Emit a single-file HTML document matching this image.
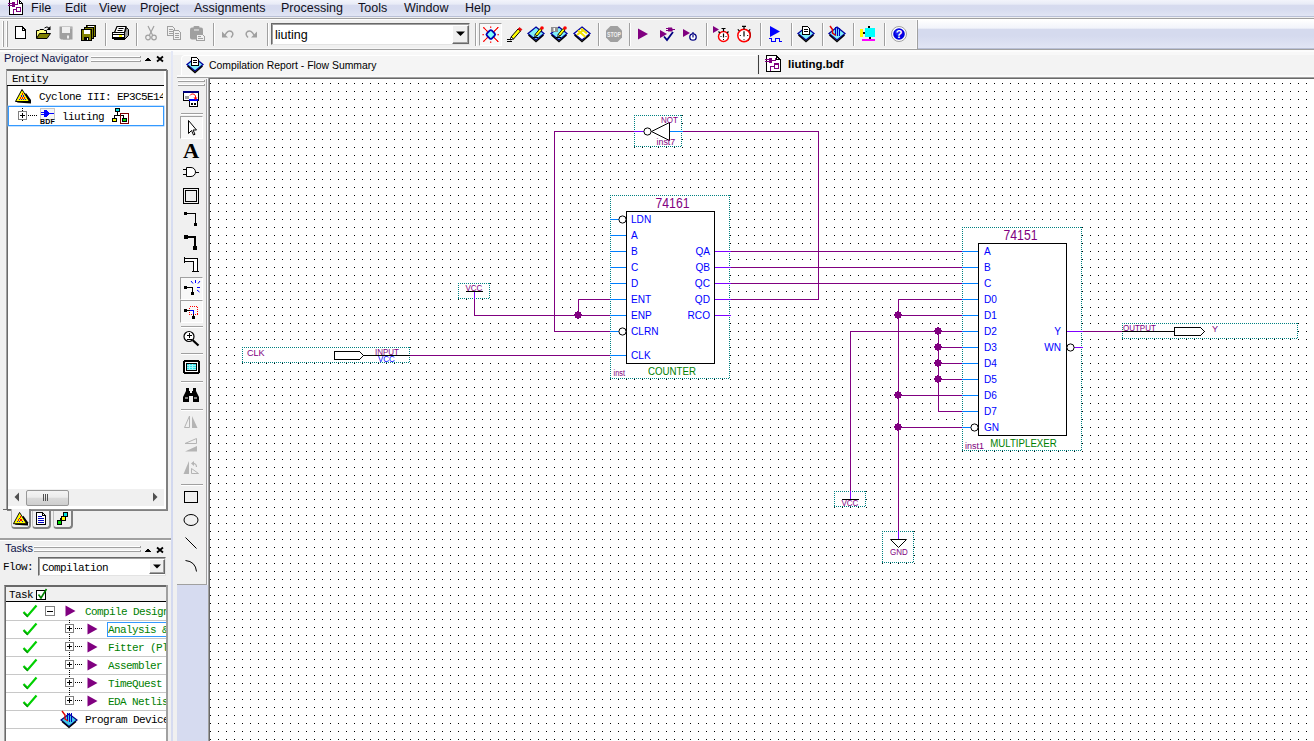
<!DOCTYPE html>
<html><head><meta charset="utf-8"><title>Quartus II - liuting</title>
<style>
html,body{margin:0;padding:0;}
body{width:1314px;height:741px;overflow:hidden;background:#f0f0f0;position:relative;font-family:"Liberation Sans",sans-serif;}
.abs{position:absolute;}
.ui{font-family:"Liberation Sans",sans-serif;font-size:10.5px;color:#000;white-space:nowrap;}
.mono{font-family:"Liberation Mono",monospace;font-size:11px;letter-spacing:-0.6px;color:#000;white-space:nowrap;}
.menu span{position:absolute;top:1px;font-size:12.5px;line-height:15px;color:#101020;white-space:nowrap;}
.sep{position:absolute;width:1px;background:#a0a0a0;border-right:1px solid #fff;}
svg{position:absolute;overflow:visible;}
</style></head><body>
<!-- menu bar -->
<div class="abs" style="left:0;top:0;width:1314px;height:16px;background:linear-gradient(#f3f4fb 0px,#e9ecf7 4px,#d7dbef 5.5px,#d6dbef 9px,#e1e5f4 16px);"></div>
<div class="abs" style="left:0;top:16px;width:1314px;height:1px;background:#b9c0d6;"></div>
<div class="abs" style="left:0;top:17px;width:1314px;height:1px;background:#f0f0f0;"></div>
<div class="abs" style="left:0;top:18px;width:1314px;height:1px;background:#a0a0a0;"></div>
<div class="abs" style="left:0;top:19px;width:1314px;height:1px;background:#ffffff;"></div>
<svg style="left:8px;top:0px" width="16" height="16" viewBox="0 0 16 16" shape-rendering="crispEdges">
 <path d="M1.500 0V14.500H14.500V3.500L11.500 0.500" fill="#fff" stroke="#000" stroke-width="1.200"/><path d="M11.500 0V3.500H14.500" fill="none" stroke="#000"/>
 <path d="M0 3.5H5M0 5.5H5" stroke="#800080" stroke-width="1"/>
 <rect x="4" y="2" width="3" height="5" fill="#800080"/>
 <path d="M7 4.5H9.5V0" stroke="#800080" fill="none"/>
 <path d="M5.5 14V9.5H8" stroke="#800080" fill="none"/>
 <rect x="8.5" y="7.5" width="4" height="4" fill="#fff" stroke="#800080"/>
</svg>
<div class="menu abs" style="left:0;top:0;height:16px;">
<span style="left:31px">File</span><span style="left:65px">Edit</span><span style="left:99px">View</span><span style="left:140px">Project</span><span style="left:194px">Assignments</span><span style="left:281px">Processing</span><span style="left:358px">Tools</span><span style="left:404px">Window</span><span style="left:465px">Help</span>
</div>
<!-- toolbar -->
<div class="abs" style="left:0;top:20px;width:1314px;height:28px;background:linear-gradient(#ffffff 0px,#f2f4fb 8px,#d5daee 9.5px,#d5daee 16px,#e1e5f4 28px);"></div>
<div class="abs" style="left:0;top:48px;width:1314px;height:1px;background:#b9c0d6;"></div>
<div class="abs" style="left:0;top:20px;width:916px;height:28px;background:#f0f0f0;border-right:1px solid #f8f8f8;border-bottom:1px solid #f8f8f8;"></div>
<div class="abs" style="left:917px;top:20px;width:1px;height:29px;background:#a0a0a0;"></div>
<div class="abs" style="left:0;top:49px;width:1314px;height:1px;background:#a0a0a0;"></div>
<div class="abs" style="left:0;top:50px;width:1314px;height:2px;background:#fcfcfc;"></div><div class="abs" style="left:173px;top:52px;width:1141px;height:3px;background:#f8f8f8;"></div>
<div class="abs" style="left:2px;top:21px;width:1px;height:26px;background:#a0a0a0;border-left:1px solid #fff"></div>
<div class="abs" style="left:6px;top:21px;width:1px;height:26px;background:#a0a0a0;border-left:1px solid #fff"></div>
<div class="sep" style="left:105px;top:23px;height:23px"></div>
<div class="sep" style="left:136px;top:23px;height:23px"></div>
<div class="sep" style="left:213px;top:23px;height:23px"></div>
<div class="sep" style="left:267px;top:23px;height:23px"></div>
<div class="sep" style="left:475px;top:23px;height:23px"></div>
<div class="sep" style="left:598px;top:23px;height:23px"></div>
<div class="sep" style="left:629px;top:23px;height:23px"></div>
<div class="sep" style="left:706px;top:23px;height:23px"></div>
<div class="sep" style="left:760px;top:23px;height:23px"></div>
<div class="sep" style="left:791px;top:23px;height:23px"></div>
<div class="sep" style="left:822px;top:23px;height:23px"></div>
<div class="sep" style="left:853px;top:23px;height:23px"></div>
<div class="sep" style="left:884px;top:23px;height:23px"></div>
<!-- combo -->
<div class="abs" style="left:271px;top:23px;width:197px;height:20px;background:#fff;border:1px solid;border-color:#696969 #e3e3e3 #e3e3e3 #696969;box-shadow:inset 1px 1px 0 #a0a0a0;"></div>
<div class="abs ui" style="left:275px;top:28px;font-size:12.5px;line-height:15px;">liuting</div>
<div class="abs" style="left:452px;top:25px;width:15px;height:17px;background:#f0f0f0;border:1px solid;border-color:#fff #696969 #696969 #fff;box-shadow:inset -1px -1px 0 #a0a0a0;"></div>
<svg style="left:456px;top:31px" width="9" height="6"><path d="M0 0.5H9L4.5 5Z" fill="#000"/></svg>
<svg style="left:11px;top:24px" width="18" height="18" viewBox="0 0 18 18"><path d="M4.5 2.5H11L14.5 6V14.5H4.5Z" fill="#fff" stroke="#000" stroke-width="1.2" shape-rendering="crispEdges"/><path d="M11 2.5V6H14.5" fill="none" stroke="#000" shape-rendering="crispEdges"/></svg>
<svg style="left:34px;top:24px" width="18" height="18" viewBox="0 0 18 18"><path d="M2.5 14V6.5H5L6 5.5H9.5L10.5 6.5H12.5V9" fill="#ffff80" stroke="#000" stroke-width="1"/><path d="M2.5 14.5L5.5 9.5H16.5L13 14.5Z" fill="#808000" stroke="#000"/><path d="M10.5 4Q13 1.5 15.5 4.5" stroke="#000" fill="none"/><path d="M16.5 2V6H12.5Z" fill="#000"/></svg>
<svg style="left:57px;top:24px" width="18" height="18" viewBox="0 0 18 18"><path d="M2.500 2.500H15.500V15.500H4L2.500 14Z" fill="#a0a0a0"/><rect x="5" y="3" width="8" height="6" fill="#f0f0f0"/><rect x="6" y="11" width="7" height="4.500" fill="#a0a0a0"/><rect x="10" y="11.500" width="2" height="3" fill="#f0f0f0"/><rect x="13.5" y="3.500" width="1" height="1" fill="#f0f0f0"/></svg>
<svg style="left:79px;top:24px" width="18" height="18" viewBox="0 0 18 18"><g shape-rendering="crispEdges"><rect x="7.5" y="1.500" width="9" height="11" fill="#808000" stroke="#000"/><rect x="5.500" y="3.500" width="9" height="11" fill="#808000" stroke="#000"/><rect x="2.500" y="5.500" width="10" height="11" fill="#808000" stroke="#000"/><rect x="4.500" y="6" width="6" height="4" fill="#fff"/><rect x="5" y="12.500" width="5" height="4" fill="#000"/><rect x="8" y="13.500" width="1" height="2" fill="#fff"/><rect x="9" y="2" width="6" height="1" fill="#fff"/></g></svg>
<svg style="left:110px;top:24px" width="20" height="18" viewBox="0 0 20 18"><path d="M14.500 8.500L16.500 3.500L18.500 5.500V11.500L14.500 15.500Z" fill="#9a9a9a" stroke="#000" stroke-width="1"/><path d="M7 2.500H16L14.500 8.500H4.500Z" fill="#fff" stroke="#000" stroke-width="1.200"/><path d="M8.500 4.500H13.500M7.500 6.500H12.500" stroke="#000" stroke-width="1"/><g shape-rendering="crispEdges"><rect x="2.500" y="8.500" width="12" height="6" fill="#fff" stroke="#000"/><path d="M3 10.500H14M3 13.500H14M4 15.500H15" stroke="#000"/><rect x="9" y="11" width="3" height="2" fill="#ffff00"/></g></svg>
<svg style="left:142px;top:24px" width="18" height="18" viewBox="0 0 18 18"><path d="M6 2L10.500 11M12 2L7.500 11" stroke="#a0a0a0" stroke-width="1.200" fill="none"/><circle cx="6" cy="13.500" r="2.300" fill="none" stroke="#a0a0a0" stroke-width="1.200"/><circle cx="12" cy="13.500" r="2.300" fill="none" stroke="#a0a0a0" stroke-width="1.200"/></svg>
<svg style="left:165px;top:24px" width="18" height="18" viewBox="0 0 18 18"><g shape-rendering="crispEdges" fill="#f0f0f0" stroke="#a0a0a0"><path d="M2.500 2.500H7.500L9.500 4.500V11.500H2.500Z"/><path d="M4 5.500H8M4 7.500H8M4 9.500H8" /><path d="M8.500 6.500H13.500L15.500 8.500V15.500H8.500Z"/><path d="M10 9.500H14M10 11.500H14M10 13.500H14"/></g></svg>
<svg style="left:188px;top:24px" width="19" height="19" viewBox="0 0 19 19"><rect x="2" y="3.500" width="13" height="12" rx="2" fill="#a0a0a0"/><rect x="5.500" y="2" width="6" height="3" rx="1" fill="#a0a0a0"/><rect x="6" y="5.500" width="5" height="1" fill="#f0f0f0"/><g shape-rendering="crispEdges"><path d="M8.500 10.500H14.500L16.500 12.500V16.500H8.500Z" fill="#f0f0f0" stroke="#a0a0a0"/><path d="M10 12.500H13M10 14.500H15" stroke="#a0a0a0"/></g></svg>
<svg style="left:219px;top:24px" width="18" height="18" viewBox="0 0 18 18"><path d="M6 11Q9 5.500 12.500 7.500Q15.500 10 12 13.500" fill="none" stroke="#a0a0a0" stroke-width="1.500"/><path d="M3 7.500V13.500H9Z" fill="#a0a0a0"/></svg>
<svg style="left:242px;top:24px" width="18" height="18" viewBox="0 0 18 18"><path d="M12 11Q9 5.500 5.500 7.500Q2.500 10 6 13.500" fill="none" stroke="#a0a0a0" stroke-width="1.500"/><path d="M15 7.500V13.500H9Z" fill="#a0a0a0"/></svg>
<div class="abs" style="left:479px;top:23px;width:21px;height:21px;background:#f8f8f8;border:1px solid;border-color:#a0a0a0 #fff #fff #a0a0a0;"></div>
<svg style="left:481px;top:25px" width="18" height="18" viewBox="0 0 18 18"><g stroke="#ff0000" stroke-width="1" fill="none"><path d="M2 2.500L7.500 7M2.500 2L7 7.500M17.500 2.500L12 7M17 2L12.500 7.500M2 16.500L7.500 12M2.500 17L7 11.500M17.500 16.500L12 12M17 17L12.500 11.500"/></g><g fill="#ff0000"><rect x="9" y="1.500" width="1.300" height="1.300"/><rect x="9" y="16.500" width="1.300" height="1.300"/><rect x="1.500" y="9" width="1.300" height="1.300"/><rect x="16.500" y="9" width="1.300" height="1.300"/></g><rect x="-3.500" y="-3.500" width="7" height="7" rx="1.600" transform="translate(9.800,9.500) rotate(45)" fill="#80ffff" stroke="#0000b0" stroke-width="1.800"/></svg>
<svg style="left:505px;top:25px" width="19" height="19" viewBox="0 0 19 19"><path d="M6 12L13 4L15.500 6L8.500 14Z" fill="#ffff00" stroke="#000" stroke-width="1"/><path d="M13 4L14.500 2.500L17 4.500L15.500 6Z" fill="#ff0000" stroke="#c00000" stroke-width="0.600"/><path d="M6 12L5 15L8.500 14Z" fill="#fff" stroke="#000" stroke-width="0.800"/><path d="M2 14.500H7M2 16.500H7" stroke="#000" stroke-width="1" shape-rendering="crispEdges"/></svg>
<svg style="left:527px;top:25px" width="18" height="18" viewBox="0 0 18 18"><path d="M9 2L17 8.500L9 15L1 8.500Z" fill="#7ff0fb" stroke="#0000a0" stroke-width="1.300"/><path d="M1.500 10L9 16.500L16.500 10" stroke="#000" stroke-width="1.500" fill="none"/><path d="M8 9.500L13 3.500L15 5L10 11Z" fill="#ffff00" stroke="#000" stroke-width="0.900"/><circle cx="15" cy="3" r="1.800" fill="#ff0000"/><path d="M8 9.500L7.500 11.800L10 11Z" fill="#fff" stroke="#000" stroke-width="0.700"/><path d="M6 12.500H11" stroke="#000"/></svg>
<svg style="left:550px;top:25px" width="18" height="18" viewBox="0 0 18 18"><path d="M9 2L17 8.500L9 15L1 8.500Z" fill="#7ff0fb" stroke="#0000a0" stroke-width="1.300"/><path d="M1.500 10L9 16.500L16.500 10" stroke="#000" stroke-width="1.500" fill="none"/><rect x="1" y="2" width="7" height="5" fill="#909090"/><rect x="3.500" y="3" width="1.500" height="3" fill="#fff"/><path d="M8 9.500L13 3.500L15 5L10 11Z" fill="#ffff00" stroke="#000" stroke-width="0.900"/><circle cx="15" cy="3" r="1.800" fill="#ff0000"/><path d="M8 9.500L7.500 11.800L10 11Z" fill="#fff" stroke="#000" stroke-width="0.700"/><path d="M6 12.500H11" stroke="#000"/></svg>
<svg style="left:573px;top:25px" width="18" height="18" viewBox="0 0 18 18"><path d="M9 2L17 8.500L9 15L1 8.500Z" fill="#fff" stroke="#0000a0" stroke-width="1.300"/><path d="M1.500 10L9 16.500L16.500 10" stroke="#000" stroke-width="1.500" fill="none"/><path d="M5 5.500L12.500 12M8 3.500L14 8.500M4 10L11 4.500" stroke="#f0e000" stroke-width="2.200"/></svg>
<svg style="left:605px;top:25px" width="18" height="18" viewBox="0 0 18 18"><path d="M5.500 1H12.500L17 5.500V12.500L12.500 17H5.500L1 12.500V5.500Z" fill="#a0a0a0"/><text x="9" y="12" font-size="7.500" font-weight="bold" font-family="Liberation Sans, sans-serif" fill="#f0f0f0" text-anchor="middle" textLength="14" lengthAdjust="spacingAndGlyphs">STOP</text></svg>
<svg style="left:634px;top:25px" width="18" height="18" viewBox="0 0 18 18"><path d="M4 3.500V14.500L14 9Z" fill="#800080"/></svg>
<svg style="left:658px;top:25px" width="19" height="18" viewBox="0 0 19 18"><path d="M2 5V13L9 9Z" fill="#800080"/><path d="M8 3.500H10M8 5.500H10" stroke="#800080"/><path d="M10 2.500H14Q15.500 4.500 14 6.500H10Z" fill="#800080"/><path d="M14 4.500H17" stroke="#800080"/><path d="M6 11.500L9 15L15 7" stroke="#000080" stroke-width="1.800" fill="none"/></svg>
<svg style="left:681px;top:25px" width="19" height="18" viewBox="0 0 19 18"><path d="M2 4V12L9 8Z" fill="#800080"/><circle cx="12" cy="12" r="3.200" fill="#fff" stroke="#000080" stroke-width="1.300"/><path d="M12 7V9M12 10V12.500" stroke="#000080" stroke-width="1.200"/></svg>
<svg style="left:712px;top:25px" width="19" height="19" viewBox="0 0 19 19"><path d="M1 1V8L7 4.500Z" fill="#800080"/><circle cx="11.5" cy="11.5" r="5" fill="#fff" stroke="#ff0000" stroke-width="1.500"/><path d="M11.5 3.5V6.5M9.5 3.5H13.5M6.5 6.5L8.0 8.0M16.5 6.5L15.0 8.0" stroke="#000" stroke-width="1.200"/><path d="M11.5 8.5V12.5" stroke="#000" stroke-width="1.200"/><path d="M8.5 11.5H9.5M13.5 11.5H14.5M11.5 14.0V15.0" stroke="#000" stroke-width="1"/></svg>
<svg style="left:735px;top:25px" width="19" height="19" viewBox="0 0 19 19"><circle cx="9" cy="10.5" r="6.2" fill="#fff" stroke="#ff0000" stroke-width="1.500"/><path d="M9 1.2999999999999998V4.3M7 1.2999999999999998H11M2.8 4.3L4.3 5.8M15.2 4.3L13.7 5.8" stroke="#000" stroke-width="1.200"/><path d="M9 6.3V11.5" stroke="#000" stroke-width="1.200"/><path d="M4.8 10.5H5.8M12.2 10.5H13.2M9 14.2V15.2" stroke="#000" stroke-width="1"/><path d="M14.500 6Q17 11 13 15.500" stroke="#c00000" fill="none" stroke-width="1.200"/></svg>
<svg style="left:766px;top:25px" width="18" height="18" viewBox="0 0 18 18"><path d="M4 1V12L14 6.500Z" fill="#0000ff"/><path d="M3 13.500H5.500V16.500H9.500V13.500H13.500V16.500H16" stroke="#0000ff" stroke-width="1.200" fill="none" shape-rendering="crispEdges"/></svg>
<svg style="left:797px;top:25px" width="18" height="18" viewBox="0 0 18 18"><path d="M9 2L17 8.500L9 15L1 8.500Z" fill="#7ff0fb" stroke="#0000a0" stroke-width="1.300"/><path d="M1.500 10L9 16.500L16.500 10" stroke="#000" stroke-width="1.500" fill="none"/><path d="M5.500 1.500H10.500L12.500 3.500V9.500H5.500Z" fill="#fff" stroke="#000" shape-rendering="crispEdges"/><path d="M7 4.500H11M7 6.500H11" stroke="#000" shape-rendering="crispEdges"/></svg>
<svg style="left:828px;top:25px" width="18" height="18" viewBox="0 0 18 18"><path d="M9 2L17 8.500L9 15L1 8.500Z" fill="#7ff0fb" stroke="#0000a0" stroke-width="1.300"/><path d="M1.500 10L9 16.500L16.500 10" stroke="#000" stroke-width="1.500" fill="none"/><path d="M7.500 2V10M9.500 2V11M11.500 3V11" stroke="#0000c0" stroke-width="1.100"/><path d="M2 1L4.500 4.500V8L8 10.500" stroke="#e00000" stroke-width="1.500" fill="none"/></svg>
<svg style="left:859px;top:25px" width="18" height="18" viewBox="0 0 18 18"><g shape-rendering="crispEdges"><rect x="1" y="4" width="3" height="8" fill="#ffff00"/><rect x="4" y="7" width="3" height="2" fill="#000"/><rect x="6" y="3" width="10" height="9" fill="#00ffff"/><rect x="9" y="1" width="2" height="2" fill="#000"/><rect x="10" y="12" width="2" height="2" fill="#000"/><rect x="3" y="14" width="13" height="2" fill="#ff00ff"/></g></svg>
<svg style="left:890px;top:25px" width="18" height="18" viewBox="0 0 18 18"><circle cx="9" cy="9" r="7.500" fill="#fff" stroke="#a0a0a0" stroke-width="1"/><circle cx="9" cy="9" r="5.800" fill="#0000e0"/><circle cx="8" cy="7.500" r="3" fill="#3030ff" opacity="0.6"/><text x="9" y="13" font-size="11" font-weight="bold" font-family="Liberation Sans, sans-serif" fill="#fff" text-anchor="middle">?</text></svg>
<!-- tab row -->
<div class="abs" style="left:181px;top:55px;width:575px;height:20px;background:#f5f5f5;border-top-left-radius:4px;border-left:1px solid #fff;border-top:1px solid #fff;"></div>
<div class="abs" style="left:760px;top:55px;width:554px;height:20px;background:#f3f3f3;border-top-left-radius:4px;"></div>
<div class="abs ui" style="left:209px;top:59px;line-height:13px;font-size:10.4px;">Compilation Report - Flow Summary</div>
<div class="abs" style="left:758px;top:55px;width:1px;height:19px;background:#404040;"></div>
<div class="abs ui" style="left:788px;top:58px;line-height:13px;font-size:11.5px;font-weight:bold;">liuting.bdf</div>
<svg style="left:186px;top:56px" width="18" height="18" viewBox="0 0 18 18"><path d="M9 2L17 8.500L9 15L1 8.500Z" fill="#7ff0fb" stroke="#0000a0" stroke-width="1.300"/><path d="M1.500 10L9 16.500L16.500 10" stroke="#000" stroke-width="1.500" fill="none"/><path d="M5.500 1.500H10.500L12.500 3.500V9.500H5.500Z" fill="#fff" stroke="#000" shape-rendering="crispEdges"/><path d="M7 4.500H11M7 6.500H11" stroke="#000" shape-rendering="crispEdges"/></svg>
<svg style="left:765px;top:55px" width="17" height="18" viewBox="0 0 16 17" shape-rendering="crispEdges"><path d="M1.500 0.500V15.500H14.500V4.500L10.500 0.500Z" fill="#fff" stroke="#000" stroke-width="1.200"/><path d="M10.500 0.500V4.500H14.500" fill="none" stroke="#000"/><path d="M0 4.500H5M0 6.500H5" stroke="#800080" stroke-width="1"/><rect x="4" y="3" width="3" height="5" fill="#800080"/><path d="M7 5.500H9.500V3" stroke="#800080" fill="none"/><path d="M5.500 15V10.500H8" stroke="#800080" fill="none"/><rect x="8.500" y="8.500" width="4" height="4" fill="#fff" stroke="#800080"/></svg>
<!-- left: project navigator -->
<div class="abs" style="left:171px;top:51px;width:2px;height:690px;background:linear-gradient(#e4e8f6,#cfd6ee 40%,#d6dbf0);"></div>
<div class="abs ui" style="left:4px;top:52px;font-size:11px;line-height:13px;color:#0c1248;">Project Navigator</div>
<div class="abs" style="left:91px;top:56px;width:49px;height:1px;background:#fff;border-bottom:1px solid #a0a0a0;border-right:1px solid #a0a0a0;"></div>
<div class="abs" style="left:91px;top:60px;width:49px;height:1px;background:#fff;border-bottom:1px solid #a0a0a0;border-right:1px solid #a0a0a0;"></div>
<svg style="left:144px;top:55px" width="22" height="8" shape-rendering="crispEdges"><path d="M1 6H7V5H6V4H5V3H3V4H2V5H1Z" fill="#000"/><path d="M13 1.5L19 6.5M19 1.5L13 6.5" stroke="#000" stroke-width="1.8" shape-rendering="auto"/></svg>
<div class="abs" style="left:6px;top:69px;width:159px;height:439px;background:#fff;border:1px solid;border-color:#696969 #808080 #909090 #a0a0a0;box-shadow:inset 1px 1px 0 #696969, 1px 1px 0 #808080;"></div>
<div class="abs" style="left:7px;top:71px;width:157px;height:14px;background:#f0f0f0;border-bottom:1px solid #000;"></div>
<div class="abs mono" style="left:12px;top:73px;line-height:13px;">Entity</div>
<svg style="left:14px;top:88px" width="18" height="17" viewBox="0 0 18 17">
 <path d="M3 14.5L17 15.5L17 12L12 5Z" fill="#000"/>
 <path d="M8 1.5L1.5 13.5H15.5Z" fill="#ffff00" stroke="#000" stroke-width="1" stroke-linejoin="round"/>
 <g shape-rendering="crispEdges"><rect x="8" y="5" width="1" height="2" fill="#ff0000"/><rect x="7" y="7" width="1" height="2" fill="#0000ff"/><rect x="9" y="7" width="1" height="2" fill="#0000ff"/><rect x="6" y="9" width="1" height="2" fill="#ff0000"/><rect x="8" y="9" width="1" height="2" fill="#ff0000"/><rect x="10" y="9" width="1" height="2" fill="#ff0000"/><rect x="5" y="11" width="1" height="1" fill="#0000ff"/><rect x="7" y="11" width="1" height="1" fill="#0000ff"/><rect x="9" y="11" width="1" height="1" fill="#0000ff"/><rect x="11" y="11" width="1" height="1" fill="#0000ff"/></g>
</svg>
<div class="abs mono" style="left:39px;top:91px;line-height:13px;width:124px;overflow:hidden;">Cyclone III: EP3C5E144</div>
<div class="abs" style="left:8px;top:106px;width:154px;height:18px;border:1px solid #3399ff;box-shadow:0 0 0 0.5px #8cc4ff;"></div>
<svg style="left:17px;top:107px" width="40" height="18" viewBox="0 0 40 18" shape-rendering="crispEdges">
 <rect x="1.5" y="4.5" width="8" height="8" fill="#fff" stroke="#808080"/><path d="M3 8.5H8M5.5 6V11" stroke="#000"/>
 <path d="M5.5 1V4M5.5 13V14" stroke="#000" stroke-dasharray="1 1"/>
 <path d="M11 8.5H20" stroke="#000" stroke-dasharray="1 1"/>
 <rect x="23" y="1" width="14" height="11" fill="#f4f4f4" stroke="#c8c8c8" stroke-width="1"/>
 <path d="M24 5.5H28M24 7.5H28M32 6.5H37" stroke="#0000ff"/><path d="M27 3H30L33 6.5L30 10H27Z" fill="#0000ff"/>
</svg>
<div class="abs" style="left:40px;top:118px;font:bold 7px 'Liberation Sans',sans-serif;letter-spacing:0.2px;color:#000;line-height:7px;">BDF</div>
<div class="abs mono" style="left:62px;top:111px;line-height:13px;">liuting</div>
<svg style="left:111px;top:107px" width="19" height="18" viewBox="0 0 19 18" shape-rendering="crispEdges">
 <path d="M6.5 4V8.5M3.5 12V8.5H12.5V12" stroke="#000" fill="none"/>
 <rect x="4.5" y="1.5" width="4" height="3" fill="#00e0e0" stroke="#000"/>
 <rect x="1.5" y="11.5" width="4" height="3" fill="#ffff00" stroke="#000"/>
 <rect x="9.5" y="6.5" width="8" height="10" fill="none" stroke="#800000"/>
 <rect x="11.5" y="11.5" width="4" height="3" fill="#00e000" stroke="#000"/>
</svg>
<!-- h scrollbar -->
<div class="abs" style="left:8px;top:489px;width:156px;height:17px;background:#f0f0f0;"></div>
<svg style="left:14px;top:492px" width="6" height="10"><path d="M5 0.5V9.5L0.5 5Z" fill="#505050"/></svg>
<svg style="left:152px;top:492px" width="6" height="10"><path d="M1 0.5V9.5L5.5 5Z" fill="#505050"/></svg>
<div class="abs" style="left:26px;top:490px;width:41px;height:14px;border:1px solid #979797;border-radius:2px;background:linear-gradient(#f4f4f4 0,#ececec 45%,#dadada 50%,#cecece 100%);"></div>
<div class="abs" style="left:43px;top:494px;width:1px;height:7px;background:#505050;box-shadow:2px 0 0 #505050,4px 0 0 #505050;"></div>
<!-- bottom tabs -->
<div class="abs" style="left:3px;top:509px;width:8px;height:1px;background:#696969;"></div>
<div class="abs" style="left:11px;top:509px;width:17px;height:18px;background:#f0f0f0;border:solid #808080;border-width:0 2px 2px 1px;border-left-color:#b0b0b0;border-radius:0 0 4px 4px;"></div>
<div class="abs" style="left:32px;top:511px;width:16px;height:16px;background:#f0f0f0;border:solid #808080;border-width:0 2px 2px 1px;border-left-color:#c0c0c0;border-radius:0 0 4px 4px;"></div>
<div class="abs" style="left:53px;top:511px;width:17px;height:16px;background:#f0f0f0;border:solid #808080;border-width:0 2px 2px 1px;border-left-color:#c0c0c0;border-radius:0 0 4px 4px;"></div>
<svg style="left:12px;top:511px" width="17" height="16" viewBox="0 0 18 17">
 <path d="M3 14.5L17 15.5L17 12L12 5Z" fill="#000"/>
 <path d="M8 1.5L1.5 13.5H15.5Z" fill="#ffff00" stroke="#000" stroke-width="1" stroke-linejoin="round"/>
 <g shape-rendering="crispEdges"><rect x="8" y="5" width="1" height="2" fill="#ff0000"/><rect x="7" y="7" width="1" height="2" fill="#0000ff"/><rect x="9" y="7" width="1" height="2" fill="#0000ff"/><rect x="6" y="9" width="1" height="2" fill="#ff0000"/><rect x="8" y="9" width="1" height="2" fill="#ff0000"/><rect x="10" y="9" width="1" height="2" fill="#ff0000"/><rect x="5" y="11" width="1" height="1" fill="#0000ff"/><rect x="7" y="11" width="1" height="1" fill="#0000ff"/><rect x="9" y="11" width="1" height="1" fill="#0000ff"/><rect x="11" y="11" width="1" height="1" fill="#0000ff"/></g>
</svg>
<svg style="left:35px;top:512px" width="12" height="14" viewBox="0 0 12 14" shape-rendering="crispEdges">
 <path d="M1.5 0.5H7.5L10.5 3.5V12.5H1.5Z" fill="#fff" stroke="#000"/><path d="M7.5 0.5V3.5H10.5" fill="none" stroke="#000"/>
 <path d="M3 4.5H7M3 6.5H9M3 8.5H9M3 10.5H9" stroke="#0000c0"/>
</svg>
<svg style="left:56px;top:512px" width="14" height="14" viewBox="0 0 14 14" shape-rendering="crispEdges">
 <path d="M4.5 9V6.5H7M9.5 6V4" stroke="#000" fill="none"/>
 <rect x="7.5" y="0.5" width="4" height="4" fill="#00e0e0" stroke="#000"/>
 <rect x="5.5" y="4.5" width="4" height="4" fill="#ffff00" stroke="#000"/>
 <rect x="1.5" y="8.5" width="4" height="4" fill="#00e000" stroke="#000"/>
</svg>
<!-- tasks -->
<div class="abs" style="left:0;top:538px;width:171px;height:2px;background:#a0a0a0;border-bottom:1px solid #fff;"></div>
<div class="abs ui" style="left:5px;top:542px;font-size:11px;line-height:13px;color:#0c1248;">Tasks</div>
<div class="abs" style="left:34px;top:546px;width:106px;height:1px;background:#fff;border-bottom:1px solid #a0a0a0;border-right:1px solid #a0a0a0;"></div>
<div class="abs" style="left:34px;top:550px;width:106px;height:1px;background:#fff;border-bottom:1px solid #a0a0a0;border-right:1px solid #a0a0a0;"></div>
<svg style="left:144px;top:546px" width="22" height="8" shape-rendering="crispEdges"><path d="M1 6H7V5H6V4H5V3H3V4H2V5H1Z" fill="#000"/><path d="M13 1.5L19 6.5M19 1.5L13 6.5" stroke="#000" stroke-width="1.8" shape-rendering="auto"/></svg>
<div class="abs mono" style="left:3px;top:561px;line-height:13px;">Flow:</div>
<div class="abs" style="left:38px;top:557px;width:126px;height:17px;background:#fff;border:1px solid;border-color:#696969 #e3e3e3 #e3e3e3 #696969;box-shadow:inset 1px 1px 0 #a0a0a0;"></div>
<div class="abs mono" style="left:42px;top:562px;line-height:13px;">Compilation</div>
<div class="abs" style="left:149px;top:559px;width:14px;height:13px;background:#f0f0f0;border:1px solid;border-color:#fff #696969 #696969 #fff;box-shadow:inset -1px -1px 0 #a0a0a0;"></div>
<svg style="left:153px;top:564px" width="8" height="5"><path d="M0 0.5H8L4 4.5Z" fill="#000"/></svg>
<div class="abs" style="left:4px;top:585px;width:161px;height:160px;background:#fff;border:1px solid;border-color:#696969 #e3e3e3 #e3e3e3 #a0a0a0;box-shadow:inset 1px 1px 0 #696969, 1px 0 0 #fff;"></div>
<div class="abs" style="left:6px;top:587px;width:160px;height:14px;background:#f0f0f0;border-bottom:1px solid #000;"></div>
<div class="abs mono" style="left:9px;top:589px;line-height:13px;">Task</div>
<svg style="left:35px;top:588px" width="13" height="13" viewBox="0 0 13 13"><rect x="1.5" y="2.5" width="9" height="9" fill="#fff" stroke="#000"/><path d="M3.5 6.5L6 10L11.5 1" stroke="#008000" stroke-width="1.6" fill="none"/></svg>
<div class="abs" style="left:6px;top:620px;width:160px;height:1px;background:#c8c8c8;"></div>
<svg style="left:22px;top:604px" width="16" height="14" viewBox="0 0 16 14"><path d="M1.5 8L5.5 12L14.5 1.5" stroke="#00d000" stroke-width="2.2" fill="none"/><path d="M2 9.5L5.5 13" stroke="#006000" stroke-width="1" fill="none"/></svg>
<svg style="left:45px;top:606px" width="11" height="11" shape-rendering="crispEdges"><rect x="0.5" y="0.5" width="9" height="9" fill="#fff" stroke="#808080"/><path d="M2 5.5H8" stroke="#000"/></svg>
<svg style="left:65px;top:605px" width="11" height="12"><path d="M0.5 0.5V11.5L10.5 6Z" fill="#800080"/></svg>
<div class="abs mono" style="left:85px;top:606px;line-height:13px;color:#008000;width:81px;overflow:hidden;">Compile Design</div>
<div class="abs" style="left:6px;top:638px;width:160px;height:1px;background:#c8c8c8;"></div>
<svg style="left:22px;top:622px" width="16" height="14" viewBox="0 0 16 14"><path d="M1.5 8L5.5 12L14.5 1.5" stroke="#00d000" stroke-width="2.2" fill="none"/><path d="M2 9.5L5.5 13" stroke="#006000" stroke-width="1" fill="none"/></svg>
<svg style="left:64px;top:620px" width="22" height="18" shape-rendering="crispEdges"><path d="M5.5 0V18" stroke="#000" stroke-dasharray="1 1"/><rect x="1.5" y="4.5" width="8" height="8" fill="#fff" stroke="#808080"/><path d="M3 8.5H8M5.5 6V11" stroke="#000"/><path d="M11 8.5H19" stroke="#000" stroke-dasharray="1 1"/></svg>
<svg style="left:87px;top:623px" width="11" height="12"><path d="M0.5 0.5V11.5L10.5 6Z" fill="#800080"/></svg>
<div class="abs" style="left:107px;top:622px;width:62px;height:13px;border:1px solid #3399ff;border-right:none;"></div>
<div class="abs mono" style="left:108px;top:624px;line-height:13px;color:#008000;width:58px;overflow:hidden;">Analysis &amp; Synthesis</div>
<div class="abs" style="left:6px;top:656px;width:160px;height:1px;background:#c8c8c8;"></div>
<svg style="left:22px;top:640px" width="16" height="14" viewBox="0 0 16 14"><path d="M1.5 8L5.5 12L14.5 1.5" stroke="#00d000" stroke-width="2.2" fill="none"/><path d="M2 9.5L5.5 13" stroke="#006000" stroke-width="1" fill="none"/></svg>
<svg style="left:64px;top:638px" width="22" height="18" shape-rendering="crispEdges"><path d="M5.5 0V18" stroke="#000" stroke-dasharray="1 1"/><rect x="1.5" y="4.5" width="8" height="8" fill="#fff" stroke="#808080"/><path d="M3 8.5H8M5.5 6V11" stroke="#000"/><path d="M11 8.5H19" stroke="#000" stroke-dasharray="1 1"/></svg>
<svg style="left:87px;top:641px" width="11" height="12"><path d="M0.5 0.5V11.5L10.5 6Z" fill="#800080"/></svg>
<div class="abs mono" style="left:108px;top:642px;line-height:13px;color:#008000;width:58px;overflow:hidden;">Fitter (Place &amp; Route)</div>
<div class="abs" style="left:6px;top:674px;width:160px;height:1px;background:#c8c8c8;"></div>
<svg style="left:22px;top:658px" width="16" height="14" viewBox="0 0 16 14"><path d="M1.5 8L5.5 12L14.5 1.5" stroke="#00d000" stroke-width="2.2" fill="none"/><path d="M2 9.5L5.5 13" stroke="#006000" stroke-width="1" fill="none"/></svg>
<svg style="left:64px;top:656px" width="22" height="18" shape-rendering="crispEdges"><path d="M5.5 0V18" stroke="#000" stroke-dasharray="1 1"/><rect x="1.5" y="4.5" width="8" height="8" fill="#fff" stroke="#808080"/><path d="M3 8.5H8M5.5 6V11" stroke="#000"/><path d="M11 8.5H19" stroke="#000" stroke-dasharray="1 1"/></svg>
<svg style="left:87px;top:659px" width="11" height="12"><path d="M0.5 0.5V11.5L10.5 6Z" fill="#800080"/></svg>
<div class="abs mono" style="left:108px;top:660px;line-height:13px;color:#008000;width:58px;overflow:hidden;">Assembler (Generate programming files)</div>
<div class="abs" style="left:6px;top:692px;width:160px;height:1px;background:#c8c8c8;"></div>
<svg style="left:22px;top:676px" width="16" height="14" viewBox="0 0 16 14"><path d="M1.5 8L5.5 12L14.5 1.5" stroke="#00d000" stroke-width="2.2" fill="none"/><path d="M2 9.5L5.5 13" stroke="#006000" stroke-width="1" fill="none"/></svg>
<svg style="left:64px;top:674px" width="22" height="18" shape-rendering="crispEdges"><path d="M5.5 0V18" stroke="#000" stroke-dasharray="1 1"/><rect x="1.5" y="4.5" width="8" height="8" fill="#fff" stroke="#808080"/><path d="M3 8.5H8M5.5 6V11" stroke="#000"/><path d="M11 8.5H19" stroke="#000" stroke-dasharray="1 1"/></svg>
<svg style="left:87px;top:677px" width="11" height="12"><path d="M0.5 0.5V11.5L10.5 6Z" fill="#800080"/></svg>
<div class="abs mono" style="left:108px;top:678px;line-height:13px;color:#008000;width:58px;overflow:hidden;">TimeQuest Timing Analysis</div>
<div class="abs" style="left:6px;top:710px;width:160px;height:1px;background:#c8c8c8;"></div>
<svg style="left:22px;top:694px" width="16" height="14" viewBox="0 0 16 14"><path d="M1.5 8L5.5 12L14.5 1.5" stroke="#00d000" stroke-width="2.2" fill="none"/><path d="M2 9.5L5.5 13" stroke="#006000" stroke-width="1" fill="none"/></svg>
<svg style="left:64px;top:692px" width="22" height="18" shape-rendering="crispEdges"><path d="M5.5 0V5" stroke="#000" stroke-dasharray="1 1"/><rect x="1.5" y="4.5" width="8" height="8" fill="#fff" stroke="#808080"/><path d="M3 8.5H8M5.5 6V11" stroke="#000"/><path d="M11 8.5H19" stroke="#000" stroke-dasharray="1 1"/></svg>
<svg style="left:87px;top:695px" width="11" height="12"><path d="M0.5 0.5V11.5L10.5 6Z" fill="#800080"/></svg>
<div class="abs mono" style="left:108px;top:696px;line-height:13px;color:#008000;width:58px;overflow:hidden;">EDA Netlist Writer</div>
<div class="abs" style="left:6px;top:728px;width:160px;height:1px;background:#c8c8c8;"></div>
<svg style="left:60px;top:710px" width="18" height="18" viewBox="0 0 18 18"><path d="M9 4L17 10L9 16.5L1 10Z" fill="#40c8e8" stroke="#000080" stroke-width="1.2"/><path d="M2 11.5L9 17.5L16 11.5" stroke="#000" stroke-width="1.2" fill="none"/><path d="M7.5 3V11M9.5 3V12M11.5 3V12" stroke="#0000c0" stroke-width="1"/><path d="M2 1L5 5L5 9L8 11" stroke="#e00000" stroke-width="1.4" fill="none"/></svg>
<div class="abs mono" style="left:85px;top:714px;line-height:13px;color:#000;width:81px;overflow:hidden;">Program Device (Open Programmer)</div>
<div class="abs" style="left:166px;top:585px;width:3px;height:156px;background:#f0f0f0;border-left:2px solid #a0a0a0;"></div>
<!-- vertical toolbar -->
<div class="abs" style="left:177px;top:585px;width:31px;height:156px;background:#d6dbf0;"></div>
<div class="abs" style="left:177px;top:584px;width:29px;height:1px;background:#a0a0a0;"></div>
<div class="abs" style="left:206px;top:79px;width:1px;height:506px;background:#a0a0a0;"></div><div class="abs" style="left:207px;top:78px;width:1px;height:507px;background:#f4f5fb;"></div>
<div class="abs" style="left:178px;top:80px;width:26px;height:1px;background:#fff;border-bottom:1px solid #a0a0a0;border-right:1px solid #a0a0a0;"></div>
<div class="abs" style="left:178px;top:84px;width:26px;height:1px;background:#fff;border-bottom:1px solid #a0a0a0;border-right:1px solid #a0a0a0;"></div>
<div class="abs" style="left:181px;top:113px;width:22px;height:1px;background:#a0a0a0;border-bottom:1px solid #fff;"></div>
<div class="abs" style="left:181px;top:326px;width:22px;height:1px;background:#a0a0a0;border-bottom:1px solid #fff;"></div>
<div class="abs" style="left:181px;top:353px;width:22px;height:1px;background:#a0a0a0;border-bottom:1px solid #fff;"></div>
<div class="abs" style="left:181px;top:381px;width:22px;height:1px;background:#a0a0a0;border-bottom:1px solid #fff;"></div>
<div class="abs" style="left:181px;top:409px;width:22px;height:1px;background:#a0a0a0;border-bottom:1px solid #fff;"></div>
<div class="abs" style="left:181px;top:484px;width:22px;height:1px;background:#a0a0a0;border-bottom:1px solid #fff;"></div>
<div class="abs" style="left:180px;top:116px;width:21px;height:21px;background:#f8f8f8;border:1px solid;border-color:#a0a0a0 #fff #fff #a0a0a0;"></div>
<div class="abs" style="left:180px;top:277px;width:21px;height:21px;background:#f8f8f8;border:1px solid;border-color:#a0a0a0 #fff #fff #a0a0a0;"></div>
<div class="abs" style="left:180px;top:300px;width:21px;height:21px;background:#f8f8f8;border:1px solid;border-color:#a0a0a0 #fff #fff #a0a0a0;"></div>
<svg style="left:180px;top:88px" width="22" height="22" viewBox="0 0 22 22"><g shape-rendering="crispEdges"><rect x="3.5" y="3.5" width="15" height="9" fill="#fff" stroke="#000"/><rect x="3" y="3" width="16" height="2" fill="#000080"/><rect x="5" y="8" width="4" height="3" fill="#a0a0a0"/><rect x="9.5" y="12.5" width="8" height="6" fill="#fff" stroke="#000"/><rect x="9" y="11" width="9" height="2" fill="#0000ff"/><rect x="11" y="15" width="2" height="2" fill="#000"/><rect x="14" y="15" width="2" height="2" fill="#000"/></g><path d="M10 7.5A3 3 0 0 1 15.5 8V10" stroke="#ff0000" fill="none"/><path d="M13.5 9.5H17.5L15.5 12Z" fill="#ff0000"/></svg>
<svg style="left:180px;top:117px" width="22" height="22" viewBox="0 0 22 22"><path d="M8.5 3.5V16.5L11.5 13.5L13.5 18L15 17.3L13 13H16.5Z" fill="#fff" stroke="#000" stroke-width="1"/></svg>
<div class="abs" style="left:181px;top:140px;width:20px;text-align:center;font:bold 20px 'Liberation Serif',serif;line-height:22px;transform:scaleX(1.12);color:#000;">A</div>
<svg style="left:180px;top:161px" width="22" height="22" viewBox="0 0 22 22"><path d="M6.5 6.5H11A4.5 4.5 0 0 1 11 15.5H6.5Z" fill="#fff" stroke="#000"/><path d="M3 8.5H6.5M3 13.5H6.5M15.5 11H19" stroke="#000" shape-rendering="crispEdges"/></svg>
<svg style="left:180px;top:185px" width="22" height="22" viewBox="0 0 22 22"><g shape-rendering="crispEdges" fill="none" stroke="#000"><rect x="3.5" y="3.5" width="15" height="15"/><rect x="5.5" y="5.5" width="11" height="11"/></g></svg>
<svg style="left:180px;top:208px" width="22" height="22" viewBox="0 0 22 22"><g shape-rendering="crispEdges"><path d="M5 5.5H15.5V16" stroke="#000" fill="none"/><rect x="4" y="4" width="3" height="3"/><rect x="14" y="15" width="3" height="3"/></g></svg>
<svg style="left:180px;top:231px" width="22" height="22" viewBox="0 0 22 22"><g shape-rendering="crispEdges"><path d="M5 6H15V17" stroke="#000" stroke-width="2" fill="none"/><rect x="4" y="4" width="4" height="4"/><rect x="13" y="15" width="4" height="4"/></g></svg>
<svg style="left:180px;top:253px" width="22" height="22" viewBox="0 0 22 22"><g shape-rendering="crispEdges"><path d="M4.5 5.5V8.5H13.5V18.5H17.5V5.5Z" fill="#fff" stroke="#000"/><path d="M4.5 4V10" stroke="#000"/><path d="M12 18.5H19" stroke="#000"/></g></svg>
<svg style="left:180px;top:277px" width="22" height="22" viewBox="0 0 22 22"><g shape-rendering="crispEdges"><path d="M6 10.5H12.5V16" stroke="#000" fill="none"/><rect x="4" y="9" width="3" height="3"/><rect x="11" y="15" width="3" height="3"/></g><path d="M15.5 3V6M11 4L13 6.5M20 4L18 6.5M17 10.5H20M17 13L19.5 15" stroke="#0000ff" fill="none"/></svg>
<svg style="left:180px;top:300px" width="22" height="22" viewBox="0 0 22 22"><g shape-rendering="crispEdges"><rect x="9.5" y="6.5" width="8" height="8" fill="none" stroke="#ff0000" stroke-dasharray="1 1"/><path d="M6 10.5H10" stroke="#000"/><path d="M10 10.5H13.5V14" stroke="#0000ff" fill="none"/><path d="M13.5 14V17" stroke="#000"/><rect x="4" y="9" width="3" height="3"/><rect x="12" y="16" width="3" height="3"/></g></svg>
<svg style="left:180px;top:328px" width="22" height="22" viewBox="0 0 22 22"><circle cx="9" cy="8.5" r="5" fill="#fff" stroke="#000" stroke-width="1.2"/><path d="M12.8 12.2L18.5 17.5" stroke="#000" stroke-width="2.2"/><path d="M6.5 7.5H11.5M9 5V10M6.5 11H11.5" stroke="#000" stroke-width="1" shape-rendering="crispEdges"/></svg>
<svg style="left:180px;top:356px" width="22" height="22" viewBox="0 0 22 22"><g shape-rendering="crispEdges"><rect x="4" y="5" width="15" height="12" rx="1" fill="#fff" stroke="#000" stroke-width="1.4"/><rect x="6.5" y="7.5" width="10" height="7" fill="#30e0e8" stroke="#000"/><path d="M7 9.5H16M7 11.5H16M7 13.5H16M9.5 8V14M12.5 8V14" stroke="#a0f4f8" stroke-width="1"/></g></svg>
<svg style="left:180px;top:384px" width="22" height="22" viewBox="0 0 22 22"><g fill="#000"><path d="M6 4H9V7H10V9H12V7H13V4H16V7L19 13V18H13V12H9V18H3V13L6 7Z"/></g><path d="M5 14H8M14 14H17" stroke="#fff" stroke-width="1"/></svg>
<svg style="left:180px;top:411px" width="22" height="22" viewBox="0 0 22 22"><path d="M9.5 5V16.5H4.5Z" fill="#f0f0f0" stroke="#b4b4b4"/><path d="M12 5V17H17.5Z" fill="#b4b4b4"/></svg>
<svg style="left:180px;top:434px" width="22" height="22" viewBox="0 0 22 22"><path d="M16.5 4.5V9.5H5Z" fill="#f0f0f0" stroke="#b4b4b4"/><path d="M17 12V17.5H5Z" fill="#b4b4b4" transform="translate(0,0)"/></svg>
<svg style="left:180px;top:457px" width="22" height="22" viewBox="0 0 22 22"><path d="M9 4V17H3.5Z" fill="#b4b4b4"/><path d="M11.5 11.5V16.5H18.5Z" fill="#f0f0f0" stroke="#b4b4b4"/><path d="M12 6.5Q16.5 6 16.5 10" stroke="#b4b4b4" fill="none" stroke-width="1.2"/><path d="M14 4L11 6.5L14 9Z" fill="#b4b4b4"/></svg>
<svg style="left:180px;top:486px" width="22" height="22" viewBox="0 0 22 22"><rect x="4.5" y="5.5" width="13" height="11" fill="#f0f0f0" stroke="#000" shape-rendering="crispEdges"/></svg>
<svg style="left:180px;top:509px" width="22" height="22" viewBox="0 0 22 22"><ellipse cx="11" cy="11" rx="7" ry="5.5" fill="none" stroke="#000"/></svg>
<svg style="left:180px;top:532px" width="22" height="22" viewBox="0 0 22 22"><path d="M5.5 5.5L16.5 16.5" stroke="#000"/></svg>
<svg style="left:180px;top:555px" width="22" height="22" viewBox="0 0 22 22"><path d="M5.5 5.5Q15.5 6.5 16.5 16.5" stroke="#000" fill="none"/></svg>
<!-- schematic canvas -->
<div class="abs" style="left:177px;top:75px;width:1137px;height:2px;background:#fafafa;"></div>
<div class="abs" style="left:177px;top:77px;width:1137px;height:1px;background:#a0a0a0;"></div>
<div class="abs" style="left:208px;top:78px;width:1106px;height:1px;background:#696969;"></div>
<div class="abs" style="left:208px;top:78px;width:1px;height:663px;background:#a0a0a0;"></div>
<div class="abs" style="left:209px;top:78px;width:1px;height:663px;background:#696969;"></div>
<svg style="left:0;top:0" width="1314" height="741" viewBox="0 0 1314 741" font-family="Liberation Sans, sans-serif">
<defs><pattern id="dots" x="210" y="83" width="8" height="8" patternUnits="userSpaceOnUse"><rect x="0" y="0" width="1" height="1" fill="#000"/></pattern></defs>
<rect x="210" y="79" width="1104" height="662" fill="#fff"/>
<rect x="210" y="79" width="1104" height="662" fill="url(#dots)" shape-rendering="crispEdges"/>
<g shape-rendering="crispEdges" fill="none" stroke-width="1">
<path d="M730 251.5H963" stroke="#800080"/>
<path d="M730 267.5H963" stroke="#800080"/>
<path d="M730 283.5H963" stroke="#800080"/>
<path d="M730 299.5H819" stroke="#800080"/>
<path d="M818.5 131V300" stroke="#800080"/>
<path d="M682 131.5H819" stroke="#800080"/>
<path d="M554 131.5H635" stroke="#800080"/>
<path d="M554.5 131V332" stroke="#800080"/>
<path d="M554 331.5H611" stroke="#800080"/>
<path d="M474.5 291V316" stroke="#800080"/>
<path d="M474 315.5H611" stroke="#800080"/>
<path d="M578.5 299V316" stroke="#800080"/>
<path d="M578 299.5H611" stroke="#800080"/>
<path d="M410 355.5H611" stroke="#800080"/>
<path d="M898 299.5H963" stroke="#800080"/>
<path d="M898.5 299V540" stroke="#800080"/>
<path d="M898 315.5H963" stroke="#800080"/>
<path d="M850 331.5H963" stroke="#800080"/>
<path d="M850.5 331V492" stroke="#800080"/>
<path d="M938 347.5H963" stroke="#800080"/>
<path d="M938 363.5H963" stroke="#800080"/>
<path d="M938 379.5H963" stroke="#800080"/>
<path d="M898 395.5H963" stroke="#800080"/>
<path d="M938 411.5H963" stroke="#800080"/>
<path d="M938.5 331V412" stroke="#800080"/>
<path d="M898 427.5H963" stroke="#800080"/>
<path d="M1066 331.5H1123" stroke="#800080"/>
<path d="M1074 347.5H1083" stroke="#800080"/>
<path d="M577 311h2v1h2v2h1v2h-1v2h-2v1h-2v-1h-2v-2h-1v-2h1v-2h2z" fill="#800080" stroke="none"/>
<path d="M897 311h2v1h2v2h1v2h-1v2h-2v1h-2v-1h-2v-2h-1v-2h1v-2h2z" fill="#800080" stroke="none"/>
<path d="M937 327h2v1h2v2h1v2h-1v2h-2v1h-2v-1h-2v-2h-1v-2h1v-2h2z" fill="#800080" stroke="none"/>
<path d="M937 343h2v1h2v2h1v2h-1v2h-2v1h-2v-1h-2v-2h-1v-2h1v-2h2z" fill="#800080" stroke="none"/>
<path d="M937 359h2v1h2v2h1v2h-1v2h-2v1h-2v-1h-2v-2h-1v-2h1v-2h2z" fill="#800080" stroke="none"/>
<path d="M937 375h2v1h2v2h1v2h-1v2h-2v1h-2v-1h-2v-2h-1v-2h1v-2h2z" fill="#800080" stroke="none"/>
<path d="M897 391h2v1h2v2h1v2h-1v2h-2v1h-2v-1h-2v-2h-1v-2h1v-2h2z" fill="#800080" stroke="none"/>
<path d="M897 423h2v1h2v2h1v2h-1v2h-2v1h-2v-1h-2v-2h-1v-2h1v-2h2z" fill="#800080" stroke="none"/>
<rect x="634" y="115" width="48" height="32" fill="#fff" stroke="none"/>
<path d="M634 115.5H682M634 146.5H682M634.5 115V147M681.5 115V147" stroke="#008080" stroke-dasharray="1 1"/>
<rect x="610" y="195" width="120" height="184" fill="#fff" stroke="none"/>
<path d="M610 195.5H730M610 378.5H730M610.5 195V379M729.5 195V379" stroke="#008080" stroke-dasharray="1 1"/>
<rect x="962" y="227" width="120" height="224" fill="#fff" stroke="none"/>
<path d="M962 227.5H1082M962 450.5H1082M962.5 227V451M1081.5 227V451" stroke="#008080" stroke-dasharray="1 1"/>
<rect x="458" y="283" width="32" height="16" fill="#fff" stroke="none"/>
<path d="M458 283.5H490M458 298.5H490M458.5 283V299M489.5 283V299" stroke="#008080" stroke-dasharray="1 1"/>
<rect x="242" y="347" width="168" height="16" fill="#fff" stroke="none"/>
<path d="M242 347.5H410M242 362.5H410M242.5 347V363M409.5 347V363" stroke="#008080" stroke-dasharray="1 1"/>
<rect x="1122" y="323" width="176" height="16" fill="#fff" stroke="none"/>
<path d="M1122 323.5H1298M1122 338.5H1298M1122.5 323V339M1297.5 323V339" stroke="#008080" stroke-dasharray="1 1"/>
<rect x="834" y="491" width="32" height="16" fill="#fff" stroke="none"/>
<path d="M834 491.5H866M834 506.5H866M834.5 491V507M865.5 491V507" stroke="#008080" stroke-dasharray="1 1"/>
<rect x="882" y="531" width="32" height="32" fill="#fff" stroke="none"/>
<path d="M882 531.5H914M882 562.5H914M882.5 531V563M913.5 531V563" stroke="#008080" stroke-dasharray="1 1"/>
<rect x="626.5" y="211.5" width="88" height="152" stroke="#000" fill="#fff"/>
<path d="M610 235.5H626" stroke="#0080ff"/>
<path d="M610 251.5H626" stroke="#0080ff"/>
<path d="M610 267.5H626" stroke="#0080ff"/>
<path d="M610 283.5H626" stroke="#0080ff"/>
<path d="M610 299.5H626" stroke="#0080ff"/>
<path d="M610 315.5H626" stroke="#0080ff"/>
<path d="M610 355.5H626" stroke="#0080ff"/>
<path d="M610 219.5H619" stroke="#0080ff"/>
<path d="M610 331.5H619" stroke="#0080ff"/>
<path d="M715 251.5H731" stroke="#8000ff"/>
<path d="M715 267.5H731" stroke="#8000ff"/>
<path d="M715 283.5H731" stroke="#8000ff"/>
<path d="M715 299.5H731" stroke="#8000ff"/>
<path d="M715 315.5H731" stroke="#8000ff"/>
<rect x="978.5" y="243.5" width="88" height="192" stroke="#000" fill="#fff"/>
<path d="M962 251.5H978" stroke="#0080ff"/>
<path d="M962 267.5H978" stroke="#0080ff"/>
<path d="M962 283.5H978" stroke="#0080ff"/>
<path d="M962 299.5H978" stroke="#0080ff"/>
<path d="M962 315.5H978" stroke="#0080ff"/>
<path d="M962 331.5H978" stroke="#0080ff"/>
<path d="M962 347.5H978" stroke="#0080ff"/>
<path d="M962 363.5H978" stroke="#0080ff"/>
<path d="M962 379.5H978" stroke="#0080ff"/>
<path d="M962 395.5H978" stroke="#0080ff"/>
<path d="M962 411.5H978" stroke="#0080ff"/>
<path d="M962 427.5H971" stroke="#0080ff"/>
<path d="M1067 331.5H1083" stroke="#8000ff"/>
<path d="M1074 347.5H1083" stroke="#8000ff"/>
<path d="M634 131.5H644" stroke="#8000ff"/>
<path d="M670 131.5H683" stroke="#0080ff"/>
</g>
<g fill="none" stroke="#000" stroke-width="1">
<circle cx="622.5" cy="219.5" r="3.6" fill="#fff"/>
<circle cx="622.5" cy="331.5" r="3.6" fill="#fff"/>
<circle cx="974.5" cy="427.5" r="3.6" fill="#fff"/>
<circle cx="1070.5" cy="347.5" r="3.6" fill="#fff"/>
<circle cx="647.5" cy="131.5" r="3.6" fill="#fff"/>
<path d="M651.5 131.5L669.5 122.5V140.5Z"/>
<path d="M334.5 351.5H359.5L363.5 355.5L359.5 359.5H334.5Z M363.5 355.5H410" shape-rendering="crispEdges"/>
<path d="M1174.5 327.5H1200.5L1204.5 331.5L1200.5 335.5H1174.5Z M1122 331.5H1174.5" shape-rendering="crispEdges"/>
<path d="M466 291.5H483" shape-rendering="crispEdges"/>
<path d="M842 499.5H859" shape-rendering="crispEdges"/>
<path d="M890.5 539.5H906.5L898.5 547.5Z"/>
</g>
<path d="M850.5 491V499" stroke="#8000ff" shape-rendering="crispEdges"/>
<path d="M474.5 292V299" stroke="#8000ff" shape-rendering="crispEdges"/>
<path d="M898.5 531V539" stroke="#8000ff" shape-rendering="crispEdges"/>
<text transform="translate(672.5,208) scale(1,1.14)" font-size="12.2" fill="#800080" text-anchor="middle">74161</text>
<text transform="translate(1020.5,240) scale(1,1.14)" font-size="12.2" fill="#800080" text-anchor="middle">74151</text>
<text x="631" y="223" font-size="10.1" fill="#0000ff" text-anchor="start">LDN</text>
<text x="631" y="239" font-size="10.1" fill="#0000ff" text-anchor="start">A</text>
<text x="631" y="255" font-size="10.1" fill="#0000ff" text-anchor="start">B</text>
<text x="631" y="271" font-size="10.1" fill="#0000ff" text-anchor="start">C</text>
<text x="631" y="287" font-size="10.1" fill="#0000ff" text-anchor="start">D</text>
<text x="631" y="303" font-size="10.1" fill="#0000ff" text-anchor="start">ENT</text>
<text x="631" y="319" font-size="10.1" fill="#0000ff" text-anchor="start">ENP</text>
<text x="631" y="335" font-size="10.1" fill="#0000ff" text-anchor="start">CLRN</text>
<text x="631" y="359" font-size="10.1" fill="#0000ff" text-anchor="start">CLK</text>
<text x="710" y="255" font-size="10.1" fill="#0000ff" text-anchor="end">QA</text>
<text x="710" y="271" font-size="10.1" fill="#0000ff" text-anchor="end">QB</text>
<text x="710" y="287" font-size="10.1" fill="#0000ff" text-anchor="end">QC</text>
<text x="710" y="303" font-size="10.1" fill="#0000ff" text-anchor="end">QD</text>
<text x="710" y="319" font-size="10.1" fill="#0000ff" text-anchor="end">RCO</text>
<text x="984" y="255" font-size="10.1" fill="#0000ff" text-anchor="start">A</text>
<text x="984" y="271" font-size="10.1" fill="#0000ff" text-anchor="start">B</text>
<text x="984" y="287" font-size="10.1" fill="#0000ff" text-anchor="start">C</text>
<text x="984" y="303" font-size="10.1" fill="#0000ff" text-anchor="start">D0</text>
<text x="984" y="319" font-size="10.1" fill="#0000ff" text-anchor="start">D1</text>
<text x="984" y="335" font-size="10.1" fill="#0000ff" text-anchor="start">D2</text>
<text x="984" y="351" font-size="10.1" fill="#0000ff" text-anchor="start">D3</text>
<text x="984" y="367" font-size="10.1" fill="#0000ff" text-anchor="start">D4</text>
<text x="984" y="383" font-size="10.1" fill="#0000ff" text-anchor="start">D5</text>
<text x="984" y="399" font-size="10.1" fill="#0000ff" text-anchor="start">D6</text>
<text x="984" y="415" font-size="10.1" fill="#0000ff" text-anchor="start">D7</text>
<text x="984" y="431" font-size="10.1" fill="#0000ff" text-anchor="start">GN</text>
<text x="1061" y="335" font-size="10.1" fill="#0000ff" text-anchor="end">Y</text>
<text x="1061" y="351" font-size="10.1" fill="#0000ff" text-anchor="end">WN</text>
<text transform="translate(672,375) scale(1,1.15)" font-size="9.7" fill="#008000" text-anchor="middle">COUNTER</text>
<text transform="translate(1023.5,447) scale(1,1.15)" font-size="9.7" fill="#008000" text-anchor="middle">MULTIPLEXER</text>
<text transform="translate(613.5,376) scale(1,1.15)" font-size="7.4" fill="#800080" text-anchor="start">inst</text>
<text transform="translate(965,449) scale(1,1.1)" font-size="9" fill="#800080" text-anchor="start">inst1</text>
<text transform="translate(661,123) scale(1,1.06)" font-size="8" fill="#800080" text-anchor="start">NOT</text>
<text transform="translate(656.5,145) scale(1,1.05)" font-size="8.9" fill="#800080" text-anchor="start">inst7</text>
<text transform="translate(247,356) scale(1,1.09)" font-size="9.1" fill="#800080" text-anchor="start">CLK</text>
<text transform="translate(375,355) scale(1,1.06)" font-size="8" fill="#800080" text-anchor="start">INPUT</text>
<text transform="translate(378,362) scale(1,1.06)" font-size="8" fill="#0000ff" text-anchor="start">VCC</text>
<text transform="translate(1123,331) scale(1,1.06)" font-size="8" fill="#800080" text-anchor="start">OUTPUT</text>
<text transform="translate(1212,332) scale(1,1.09)" font-size="9.1" fill="#800080" text-anchor="start">Y</text>
<text transform="translate(465.5,291) scale(1,1.06)" font-size="8" fill="#800080" text-anchor="start">VCC</text>
<text transform="translate(841.5,505.8) scale(1,1.06)" font-size="8" fill="#800080" text-anchor="start">VCC</text>
<text transform="translate(890,555) scale(1,1.06)" font-size="8" fill="#800080" text-anchor="start">GND</text>
</svg>
</body></html>
